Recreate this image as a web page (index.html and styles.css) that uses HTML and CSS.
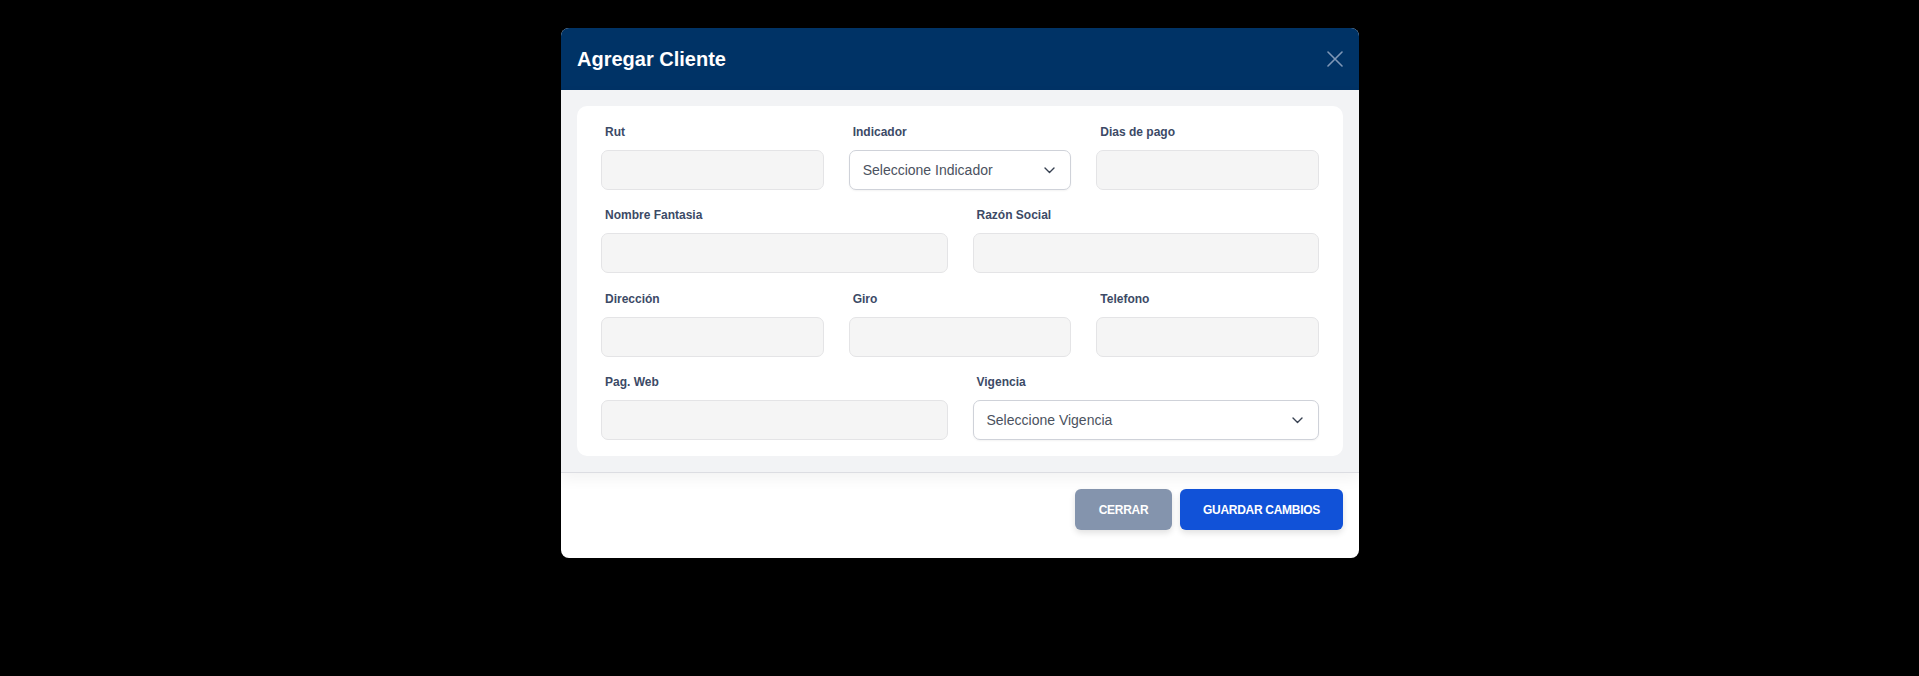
FILE: index.html
```html
<!DOCTYPE html>
<html lang="es">
<head>
<meta charset="utf-8">
<title>Agregar Cliente</title>
<link rel="stylesheet" href="styles.css">
</head>
<body>
<div class="backdrop">
  <div class="modal">
    <div class="modal-header">
      <h2 class="modal-title">Agregar Cliente</h2>
      <button class="close-btn" aria-label="Cerrar">
        <svg width="16" height="16" viewBox="0 0 16 16"><path d="M1 1L15 15M15 1L1 15" stroke="currentColor" stroke-width="1.6" fill="none" stroke-linecap="round"/></svg>
      </button>
    </div>
    <div class="modal-body">
      <div class="card">
        <div class="row cols-3">
          <div class="field"><label class="label">Rut</label><input class="input" type="text"></div>
          <div class="field"><label class="label">Indicador</label>
            <div class="select"><span>Seleccione Indicador</span>
              <svg width="11" height="7" viewBox="0 0 11 7"><path d="M1 1L5.5 5.5L10 1" stroke="#374151" stroke-width="1.4" fill="none" stroke-linecap="round" stroke-linejoin="round"/></svg>
            </div>
          </div>
          <div class="field"><label class="label">Dias de pago</label><input class="input" type="text"></div>
        </div>
        <div class="row cols-2">
          <div class="field"><label class="label">Nombre Fantasia</label><input class="input" type="text"></div>
          <div class="field"><label class="label">Razón Social</label><input class="input" type="text"></div>
        </div>
        <div class="row cols-3">
          <div class="field"><label class="label">Dirección</label><input class="input" type="text"></div>
          <div class="field"><label class="label">Giro</label><input class="input" type="text"></div>
          <div class="field"><label class="label">Telefono</label><input class="input" type="text"></div>
        </div>
        <div class="row cols-2">
          <div class="field"><label class="label">Pag. Web</label><input class="input" type="text"></div>
          <div class="field"><label class="label">Vigencia</label>
            <div class="select"><span>Seleccione Vigencia</span>
              <svg width="11" height="7" viewBox="0 0 11 7"><path d="M1 1L5.5 5.5L10 1" stroke="#374151" stroke-width="1.4" fill="none" stroke-linecap="round" stroke-linejoin="round"/></svg>
            </div>
          </div>
        </div>
      </div>
    </div>
    <div class="modal-footer">
      <button class="btn btn-secondary">CERRAR</button>
      <button class="btn btn-primary">GUARDAR CAMBIOS</button>
    </div>
  </div>
</div>
</body>
</html>
```
FILE: styles.css
```css
* { box-sizing: border-box; }
html, body { margin: 0; padding: 0; }
body {
  background: #000;
  font-family: "Liberation Sans", Arial, sans-serif;
  width: 1919px;
  height: 676px;
  overflow: hidden;
}
.backdrop {
  display: flex;
  justify-content: center;
  padding-top: 28px;
  padding-left: 1px;
}
.modal {
  width: 798px;
  height: 530px;
  background: #fff;
  border-radius: 8px;
  overflow: hidden;
  display: flex;
  flex-direction: column;
}
.modal-header {
  height: 62px;
  background: #003366;
  display: flex;
  align-items: center;
  justify-content: space-between;
  padding: 0 16px 0 16px;
}
.modal-title {
  margin: 0;
  color: #fff;
  font-size: 20px;
  font-weight: bold;
}
.close-btn {
  background: none;
  border: 0;
  padding: 0;
  color: #7f97b6;
  width: 16px;
  height: 16px;
  display: flex;
}
.modal-body {
  background: #f2f3f5;
  padding: 16px 16px 16px 16px;
  border-bottom: 1px solid #dcdde2;
  box-shadow: 0 6px 14px rgba(0, 0, 0, 0.05);
  position: relative;
  z-index: 1;
}
.card {
  background: #fff;
  border-radius: 10px;
  padding: 16px 24px;
  display: flex;
  flex-direction: column;
  gap: 15.4px;
}
.row {
  display: grid;
  column-gap: 25px;
}
.cols-3 { grid-template-columns: 1fr 1fr 1fr; }
.cols-2 { grid-template-columns: 1fr 1fr; }
.field { display: flex; flex-direction: column; }
.label {
  font-size: 12px;
  line-height: 20px;
  font-weight: bold;
  color: #3c4a66;
  padding-left: 4px;
  margin-bottom: 8px;
}
.input {
  height: 40px;
  background: #f5f5f5;
  border: 1px solid #e4e4e6;
  border-radius: 7px;
  outline: none;
  font: inherit;
}
.select {
  height: 40px;
  background: #fff;
  border: 1px solid #cfd2d9;
  border-radius: 7px;
  display: flex;
  align-items: center;
  justify-content: space-between;
  padding: 0 15px 0 13px;
  font-size: 14px;
  color: #4b5260;
  box-shadow: 0 1px 2px rgba(0, 0, 0, 0.05);
}
.modal-footer {
  display: flex;
  justify-content: flex-end;
  gap: 8px;
  padding: 16px 16px 0 16px;
}
.btn {
  height: 41px;
  border: 0;
  border-radius: 6px;
  color: #fff;
  font-family: "Liberation Sans", Arial, sans-serif;
  font-size: 12px;
  font-weight: bold;
  letter-spacing: -0.3px;
  box-shadow: 0 3px 6px rgba(0, 0, 0, 0.12);
}
.btn-secondary { width: 97px; background: #8494ad; }
.btn-primary { width: 163px; background: #1152d8; }
```
